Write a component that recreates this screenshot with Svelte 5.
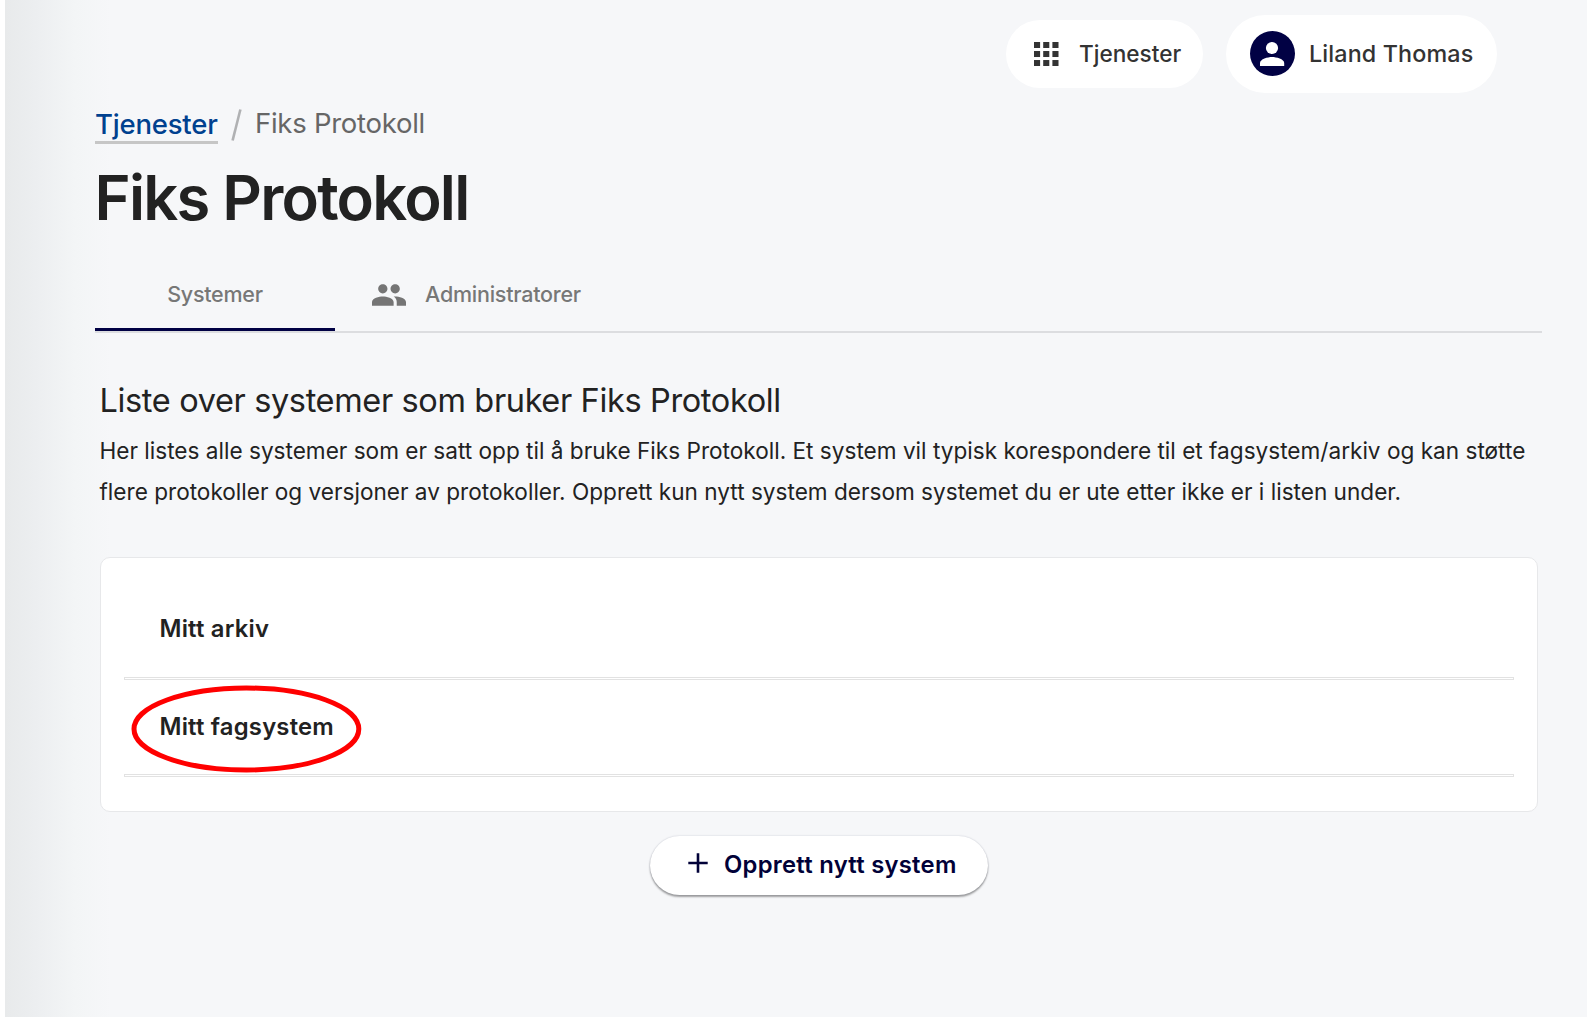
<script>
  const systems = [
    { name: 'Mitt arkiv', marked: false },
    { name: 'Mitt fagsystem', marked: true }
  ];
  const cells = [0, 9.2, 18.4];
</script>

<div class="page">
  <header class="topbar">
    <button class="pill services">
      <svg class="grid-icon" viewBox="0 0 25 24" width="25" height="24">
        {#each cells as x}
          {#each cells as y}
            <rect {x} y={y * 0.98} width="6.1" height="6" />
          {/each}
        {/each}
      </svg>
      <span>Tjenester</span>
    </button>
    <button class="pill user">
      <svg class="avatar" viewBox="0 0 45 45" width="45" height="45">
        <circle cx="22.5" cy="22.5" r="22.5" fill="#010144" />
        <circle cx="22" cy="17" r="6.1" fill="#fff" />
        <path d="M10 35v-3c0-4 8-6 12.1-6s12.1 2 12.1 6v3z" fill="#fff" />
      </svg>
      <span>Liland Thomas</span>
    </button>
  </header>

  <nav class="crumbs">
    <a href="#tjenester">Tjenester</a>
    <svg viewBox="0 0 11 32" width="11" height="32"><path d="M1.6 31.5 9.4 .5" stroke="#b0b1b3" stroke-width="2.6" /></svg>
    <span>Fiks Protokoll</span>
  </nav>

  <h1>Fiks Protokoll</h1>

  <div class="tabs">
    <button class="tab active"><span>Systemer</span></button>
    <button class="tab">
      <svg viewBox="1 5 22 14" width="34" height="22">
        <path d="M16 11c1.66 0 2.99-1.34 2.99-3S17.66 5 16 5s-3 1.34-3 3 1.34 3 3 3zm-8 0c1.66 0 2.99-1.34 2.99-3S9.66 5 8 5 5 6.34 5 8s1.34 3 3 3zm0 2c-2.33 0-7 1.17-7 3.5V19h14v-2.500c0-2.330-4.670-3.500-7-3.500zm8 0c-.29 0-.62.02-.97.05 1.160.84 1.970 1.970 1.970 3.450V19h6v-2.500c0-2.330-4.670-3.500-7-3.500z" />
      </svg>
      <span>Administratorer</span>
    </button>
  </div>

  <main>
    <h2>Liste over systemer som bruker Fiks Protokoll</h2>
    <p>
      <span class="line">Her listes alle systemer som er satt opp til å bruke Fiks Protokoll. Et system vil typisk korespondere til et fagsystem/arkiv og kan støtte</span>
      <span class="line">flere protokoller og versjoner av protokoller. Opprett kun nytt system dersom systemet du er ute etter ikke er i listen under.</span>
    </p>

    <ul class="card">
      {#each systems as system}
        <li>
          <span>{system.name}</span>
          {#if system.marked}
            <svg class="mark" viewBox="0 0 232 88" width="232" height="88">
              <ellipse cx="116.400" cy="44" rx="112.400" ry="41" />
            </svg>
          {/if}
        </li>
      {/each}
    </ul>

    <button class="create">
      <svg viewBox="0 0 20 20" width="20" height="20"><path d="M10 .3v19.400M.3 10h19.400" stroke="#010138" stroke-width="2.600" /></svg>
      <span>Opprett nytt system</span>
    </button>
  </main>
</div>

<style>
  :global(body) {
    margin: 0;
    background: #fff;
  }
  .page {
    box-sizing: border-box;
    height: 1017px;
    margin-left: 5px;
    padding: 15px 45px 0 90px;
    overflow: hidden;
    background: linear-gradient(90deg, #e8eaeb 0, #eceef0 30px, #f3f5f6 70px, #f6f7f9 106px);
    font-family: Inter, 'Liberation Sans', sans-serif;
    color: #222;
  }
  button {
    border: 0;
    padding: 0;
    background: none;
    font: inherit;
    color: inherit;
  }
  svg {
    display: block;
    flex: none;
  }
  span,
  a {
    white-space: nowrap;
  }
  .topbar {
    display: flex;
    justify-content: flex-end;
    align-items: center;
    gap: 23px;
    height: 78px;
    margin-right: 45px;
  }
  .pill {
    display: flex;
    align-items: center;
    box-sizing: border-box;
    border-radius: 40px;
    background: #fff;
    font-size: 22.600px;
    font-weight: 500;
    color: #333;
  }
  .pill span {
    padding-bottom: 2px;
  }
  .services {
    width: 197px;
    height: 68px;
    padding-left: 28px;
    gap: 20px;
  }
  .user {
    width: 271px;
    height: 78px;
    padding-left: 24px;
    gap: 14px;
    font-size: 23.300px;
    letter-spacing: 0.140px;
  }
  .user span {
    padding-bottom: 1px;
  }
  .grid-icon {
    fill: #333;
  }
  .avatar {
    margin-top: -2px;
  }
  .crumbs {
    display: flex;
    align-items: flex-start;
    height: 51px;
    margin-top: 16px;
    font-size: 27.500px;
    line-height: 28px;
    letter-spacing: -0.270px;
    color: #666;
  }
  .crumbs a {
    box-sizing: border-box;
    width: 123px;
    height: 35px;
    padding-top: 1px;
    border-bottom: 3px solid #c6c6c6;
    text-decoration: none;
    font-weight: 500;
    letter-spacing: -0.200px;
    color: #00418f;
  }
  .crumbs svg {
    margin: 0 13px 0 13px;
  }
  h1 {
    margin: 0 0 0 -0.500px;
    height: 76px;
    font-size: 61.500px;
    line-height: 76px;
    font-weight: 600;
    letter-spacing: -1.750px;
    white-space: nowrap;
  }
  .tabs {
    display: flex;
    height: 73px;
    margin-top: 22px;
    border-bottom: 2px solid #dcdde0;
    font-size: 21.500px;
    color: #777;
    fill: #757575;
  }
  .tab {
    display: flex;
    align-items: center;
    justify-content: center;
    gap: 19px;
    width: 240px;
    padding-top: 3px;
    box-sizing: border-box;
    font-weight: 500;
    letter-spacing: -0.240px;
    border-bottom: 3px solid transparent;
  }
  .tab span {
    padding-bottom: 2px;
  }
  .tab + .tab {
    width: 283px;
  }
  .tab.active {
    border-color: #010144;
  }
  main {
    display: flex;
    flex-direction: column;
    padding: 46px 4px 0 5px;
  }
  h2 {
    margin: 0 0 7px -0.500px;
    font-size: 32.500px;
    line-height: 44px;
    font-weight: 400;
    letter-spacing: -0.360px;
    white-space: nowrap;
  }
  p {
    margin: 0 0 0 -0.500px;
    font-size: 22.600px;
    line-height: 41px;
  }
  .line {
    display: block;
  }
  .card {
    box-sizing: border-box;
    height: 255px;
    margin: 45px 0 0;
    padding: 25px 23px 0;
    border: 1px solid #e7e8ea;
    border-radius: 10px;
    background: #fff;
    list-style: none;
  }
  li {
    position: relative;
    display: flex;
    align-items: center;
    box-sizing: border-box;
    height: 97px;
    padding: 0 0 7px 35.500px;
    font-size: 23.800px;
    font-weight: 600;
    letter-spacing: 0.220px;
  }
  li + li {
    padding-bottom: 5px;
  }
  li::after {
    content: '';
    position: absolute;
    left: 0;
    right: 0;
    bottom: 0;
    height: 1px;
    border: 1px solid #e2e2e2;
  }
  .mark {
    position: absolute;
    left: 6px;
    top: 5px;
    fill: none;
    stroke: #f00;
    stroke-width: 5;
  }
  .create {
    display: flex;
    align-items: center;
    box-sizing: border-box;
    align-self: center;
    width: 338px;
    height: 59px;
    margin: 24px 1px 0 0;
    padding-left: 38.500px;
    gap: 16px;
    border-radius: 30px;
    background: #fff;
    box-shadow: 0 2px 2px rgba(0, 0, 0, 0.35), 0 0 2px rgba(0, 20, 60, 0.2);
    font-size: 23.800px;
    font-weight: 600;
    letter-spacing: 0.270px;
    color: #010138;
  }
  .create svg {
    margin-bottom: 5px;
  }
  .create span {
    padding-bottom: 2px;
  }
</style>
